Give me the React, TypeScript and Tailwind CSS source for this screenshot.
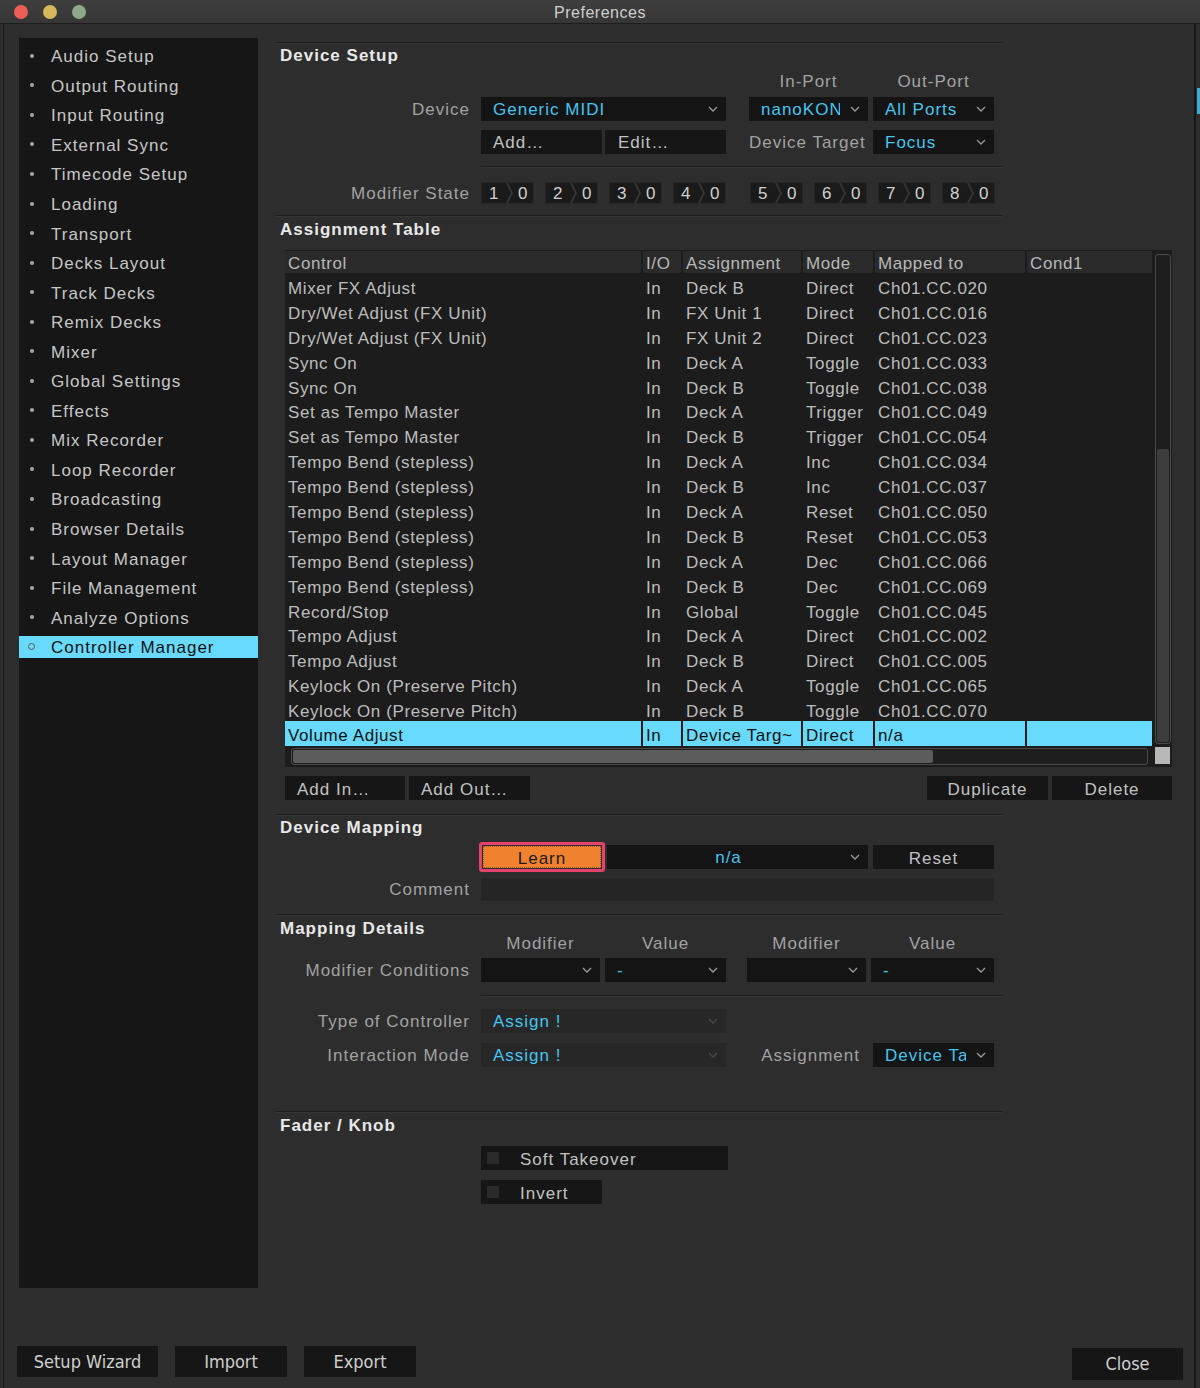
import React from "react";

const SIDEBAR = [
  "Audio Setup",
  "Output Routing",
  "Input Routing",
  "External Sync",
  "Timecode Setup",
  "Loading",
  "Transport",
  "Decks Layout",
  "Track Decks",
  "Remix Decks",
  "Mixer",
  "Global Settings",
  "Effects",
  "Mix Recorder",
  "Loop Recorder",
  "Broadcasting",
  "Browser Details",
  "Layout Manager",
  "File Management",
  "Analyze Options",
  "Controller Manager",
];

const ROWS = [
  ["Mixer FX Adjust", "In", "Deck B", "Direct", "Ch01.CC.020"],
  ["Dry/Wet Adjust (FX Unit)", "In", "FX Unit 1", "Direct", "Ch01.CC.016"],
  ["Dry/Wet Adjust (FX Unit)", "In", "FX Unit 2", "Direct", "Ch01.CC.023"],
  ["Sync On", "In", "Deck A", "Toggle", "Ch01.CC.033"],
  ["Sync On", "In", "Deck B", "Toggle", "Ch01.CC.038"],
  ["Set as Tempo Master", "In", "Deck A", "Trigger", "Ch01.CC.049"],
  ["Set as Tempo Master", "In", "Deck B", "Trigger", "Ch01.CC.054"],
  ["Tempo Bend (stepless)", "In", "Deck A", "Inc", "Ch01.CC.034"],
  ["Tempo Bend (stepless)", "In", "Deck B", "Inc", "Ch01.CC.037"],
  ["Tempo Bend (stepless)", "In", "Deck A", "Reset", "Ch01.CC.050"],
  ["Tempo Bend (stepless)", "In", "Deck B", "Reset", "Ch01.CC.053"],
  ["Tempo Bend (stepless)", "In", "Deck A", "Dec", "Ch01.CC.066"],
  ["Tempo Bend (stepless)", "In", "Deck B", "Dec", "Ch01.CC.069"],
  ["Record/Stop", "In", "Global", "Toggle", "Ch01.CC.045"],
  ["Tempo Adjust", "In", "Deck A", "Direct", "Ch01.CC.002"],
  ["Tempo Adjust", "In", "Deck B", "Direct", "Ch01.CC.005"],
  ["Keylock On (Preserve Pitch)", "In", "Deck A", "Toggle", "Ch01.CC.065"],
  ["Keylock On (Preserve Pitch)", "In", "Deck B", "Toggle", "Ch01.CC.070"],
];

function Chevron({ dim }: { dim?: boolean }) {
  return (
    <svg width="10" height="6" viewBox="0 0 10 6" className="shrink-0 ml-[10px]">
      <polyline
        points="1,1 5,5 9,1"
        fill="none"
        stroke={dim ? "#4a4a4a" : "#9a9a9a"}
        strokeWidth="1.3"
      />
    </svg>
  );
}

function Dropdown({
  className,
  text,
  textClass = "",
  dim,
  center,
}: {
  className: string;
  text?: string;
  textClass?: string;
  dim?: boolean;
  center?: boolean;
}) {
  return (
    <div
      className={`flex items-center pl-3 pr-[8px] ${dim ? "bg-[#272727]" : "bg-[#141414]"} ${className}`}
    >
      <div
        className={`flex-1 min-w-0 overflow-hidden whitespace-nowrap text-[#46c4ee] ${center ? "text-center" : ""} ${textClass}`}
      >
        {text}
      </div>
      <Chevron dim={dim} />
    </div>
  );
}

function Btn({ className, children }: { className: string; children: React.ReactNode }) {
  return (
    <div className={`flex items-center bg-[#161616] text-[#c2c2c2] ${className}`}>
      {children}
    </div>
  );
}

function ModBox({ n }: { n: number }) {
  return (
    <div className="flex items-center w-[53px] h-[22px] bg-[#1a1a1a] border border-[#262626] text-[#d0d0d0]">
      <span className="w-[24px] pl-[7px]">{n}</span>
      <svg width="7" height="20" viewBox="0 0 7 20" className="shrink-0">
        <path d="M1 0 L6 10 L1 20" fill="none" stroke="#333" strokeWidth="2" />
      </svg>
      <span className="pl-[5px]">0</span>
    </div>
  );
}

function Label({ children, className = "w-[194px]" }: { children: React.ReactNode; className?: string }) {
  return <div className={`${className} self-center text-right text-[#a2a2a2] shrink-0`}>{children}</div>;
}

function Header({ children }: { children: React.ReactNode }) {
  return <div className="pl-[4px] pt-[2px] font-bold text-[#e8e8e8]">{children}</div>;
}

function Line({ className = "w-[726px]" }: { className?: string }) {
  return <div className={`h-px bg-[#1c1c1c] shadow-[0_1px_0_#353535] ${className}`} />;
}

const COLS = [
  "w-[356px]",
  "w-[38px]",
  "w-[118px]",
  "w-[70px]",
  "w-[150px]",
  "w-[125px]",
];

function AssignmentTable() {
  const head = ["Control", "I/O", "Assignment", "Mode", "Mapped to", "Cond1"];
  return (
    <div className="ml-[9px] w-[887px] h-[517px] bg-[#1c1c1c] flex flex-col tracking-[0.6px]">
      <div className="flex h-[496px]">
        <div className="w-[867px] flex flex-col">
          <div className="flex gap-[2px] h-[23px] pt-px">
            {head.map((h, i) => (
              <div key={h} className={`${COLS[i]} bg-[#2a2a2a] pl-[3px] pt-[4px] text-[#b8b8b8]`}>
                {h}
              </div>
            ))}
          </div>
          {ROWS.map((r, ri) => (
            <div key={ri} className="flex gap-[2px] h-[24.9px] text-[#bcbcbc]">
              {[...r, ""].map((c, i) => (
                <div key={i} className={`${COLS[i]} pl-[3px] pt-[7px] whitespace-nowrap overflow-hidden`}>
                  {c}
                </div>
              ))}
            </div>
          ))}
          <div className="flex gap-[2px] h-[24.9px] text-[#111]">
            {["Volume Adjust", "In", "Device Targ~", "Direct", "n/a", ""].map((c, i) => (
              <div
                key={i}
                className={`${COLS[i]} bg-[#67dafd] pl-[3px] pt-[6px] whitespace-nowrap overflow-hidden`}
              >
                {c}
              </div>
            ))}
          </div>
        </div>
        <div className="w-[20px] pt-[4px] pl-[3px]">
          <div className="w-[16px] h-[490px] rounded-[3px] border border-[#4a4a4a] bg-[#1e1e1e] flex flex-col p-px">
            <div className="h-[193px]" />
            <div className="flex-1 rounded-[2px] bg-[#3c3c3c]" />
          </div>
        </div>
      </div>
      <div className="flex h-[21px] items-start">
        <div className="ml-[6px] mt-[2px] w-[857px] h-[17px] rounded-[3px] border border-[#4a4a4a] bg-[#1e1e1e] p-px">
          <div className="w-[640px] h-full rounded-[2px] bg-[#5c5c5c]" />
        </div>
        <div className="ml-[7px] mt-[1px] w-[15px] h-[17px] bg-[#b8b8b8]" />
      </div>
    </div>
  );
}

export default function App() {
  return (
    <div
      className="relative w-[1200px] h-[1388px] bg-[#2d2d2d] overflow-hidden flex flex-col text-[17px] tracking-[1px] leading-none"
      style={{ fontFamily: '"Liberation Sans", Arial, sans-serif' }}
    >
      {/* title bar */}
      <div className="relative h-[24px] shrink-0 bg-gradient-to-b from-[#3e3e3e] to-[#363636] border-b border-[#1d1d1d] flex items-center justify-center">
        <div className="absolute left-[14px] top-[5px] flex gap-[15px]">
          <div className="w-[14px] h-[14px] rounded-full bg-[#ec5f57]" />
          <div className="w-[14px] h-[14px] rounded-full bg-[#d7b75c]" />
          <div className="w-[14px] h-[14px] rounded-full bg-[#8fa88a]" />
        </div>
        <span className="pt-[2px] text-[16px] tracking-[0.5px] text-[#cfcfcf]">Preferences</span>
      </div>

      {/* window edges */}
      <div className="absolute left-[3px] top-[24px] bottom-0 w-px bg-[#1a1a1a]" />
      <div className="absolute right-[4px] top-[24px] bottom-0 w-[2px] bg-[#171717]" />
      <div className="absolute right-0 top-[88px] w-[3px] h-[26px] bg-[#3fa9cf]" />

      <div className="flex pl-[19px] pt-[14px]">
        {/* sidebar */}
        <div className="w-[239px] h-[1250px] bg-[#161616] pt-[3px]">
          {SIDEBAR.map((s) => {
            const sel = s === "Controller Manager";
            return (
              <div key={s} className="h-[29.55px] flex items-center">
                <div
                  className={`w-full h-[22px] flex items-center ${sel ? "bg-[#67dafd] text-[#111]" : "text-[#c6c6c6]"}`}
                >
                  <div className="w-[32px] flex justify-end pr-[16px]">
                    {sel ? (
                      <div className="w-[7px] h-[7px] rounded-full border-[1.5px] border-[#555]" />
                    ) : (
                      <div className="w-[4px] h-[4px] mr-[1px] rounded-full bg-[#a8a8a8]" />
                    )}
                  </div>
                  <span className="pt-[2px]">{s}</span>
                </div>
              </div>
            );
          })}
        </div>

        {/* main */}
        <div className="ml-[18px] w-[899px] flex flex-col">
          <div className="h-[4px]" />
          <Line />
          <div className="h-[22px] flex items-center">
            <Header>Device Setup</Header>
          </div>
          <div className="h-[32px] flex items-center text-[#a2a2a2]">
            <div className="ml-[473px] w-[119px] text-center">In-Port</div>
            <div className="ml-[5px] w-[121px] text-center">Out-Port</div>
          </div>
          <div className="h-[24px] flex">
            <Label>Device</Label>
            <div className="w-[11px]" />
            <Dropdown className="w-[245px]" text="Generic MIDI" />
            <div className="w-[23px]" />
            <Dropdown className="w-[119px]" text="nanoKONTROL2" />
            <div className="w-[5px]" />
            <Dropdown className="w-[121px]" text="All Ports" />
          </div>
          <div className="h-[24px] mt-[9px] flex items-center">
            <div className="w-[205px]" />
            <Btn className="w-[121px] h-full pl-[12px]">Add…</Btn>
            <Btn className="ml-[3px] w-[121px] h-full pl-[13px]">Edit…</Btn>
            <div className="ml-[23px] w-[124px] text-[#a2a2a2] whitespace-nowrap">Device Target</div>
            <Dropdown className="w-[121px] h-full" text="Focus" />
          </div>
          <div className="mt-[12px] ml-[205px]">
            <Line className="w-[521px]" />
          </div>
          <div className="mt-[15px] h-[22px] flex items-center">
            <Label>Modifier State</Label>
            <div className="ml-[11px] flex gap-[11px]">
              <ModBox n={1} />
              <ModBox n={2} />
              <ModBox n={3} />
              <ModBox n={4} />
            </div>
            <div className="ml-[24px] flex gap-[11px]">
              <ModBox n={5} />
              <ModBox n={6} />
              <ModBox n={7} />
              <ModBox n={8} />
            </div>
          </div>
          <div className="mt-[11px]">
            <Line />
          </div>
          <div className="h-[24px] flex items-center">
            <Header>Assignment Table</Header>
          </div>
          <div className="mt-[10px]">
            <AssignmentTable />
          </div>
          <div className="mt-[9px] h-[24px] flex ml-[9px]">
            <Btn className="w-[120px] h-full pl-[12px] pt-[2px]">Add In…</Btn>
            <Btn className="ml-[4px] w-[121px] h-full pl-[12px] pt-[2px]">Add Out…</Btn>
            <Btn className="ml-auto w-[121px] h-full justify-center pt-[2px]">Duplicate</Btn>
            <Btn className="ml-[4px] mr-[3px] w-[120px] h-full justify-center pt-[2px]">Delete</Btn>
          </div>
          <div className="mt-[14px]">
            <Line />
          </div>
          <div className="h-[22px] flex items-center">
            <Header>Device Mapping</Header>
          </div>
          <div className="mt-[5px] h-[30px] flex items-center">
            <div className="w-[203px]" />
            <div className="w-[126px] h-[30px] rounded-[3px] border-[3px] border-[#e4436c] p-px">
              <div className="w-full h-full bg-[#f0822f] flex items-center justify-center pt-[2px] text-[#1a1a1a] outline outline-1 outline-dotted outline-[#9a5a2a] -outline-offset-1">
                Learn
              </div>
            </div>
            <Dropdown className="ml-[2px] w-[261px] h-[24px]" text="n/a" textClass="pr-[2px]" center />
            <Btn className="ml-[5px] w-[121px] h-[24px] justify-center pt-[2px]">Reset</Btn>
          </div>
          <div className="mt-[6px] h-[23px] flex items-center">
            <Label>Comment</Label>
            <div className="ml-[11px] w-[513px] h-full bg-[#252525]" />
          </div>
          <div className="mt-[13px]">
            <Line />
          </div>
          <div className="h-[43px] flex">
            <div className="w-[205px] h-[24px] flex items-center">
              <Header>Mapping Details</Header>
            </div>
            <div className="pt-[20px] flex h-[18px] text-[#a2a2a2]">
              <div className="w-[119px] text-center">Modifier</div>
              <div className="ml-[5px] w-[121px] text-center">Value</div>
              <div className="ml-[21px] w-[119px] text-center">Modifier</div>
              <div className="ml-[5px] w-[123px] text-center">Value</div>
            </div>
          </div>
          <div className="h-[24px] flex items-center">
            <Label>Modifier Conditions</Label>
            <div className="w-[11px]" />
            <Dropdown className="w-[119px] h-full" />
            <Dropdown className="ml-[5px] w-[121px] h-full" text="-" />
            <Dropdown className="ml-[21px] w-[119px] h-full" />
            <Dropdown className="ml-[5px] w-[123px] h-full" text="-" />
          </div>
          <div className="mt-[13px] ml-[205px]">
            <Line className="w-[521px]" />
          </div>
          <div className="mt-[13px] h-[24px] flex items-center">
            <Label>Type of Controller</Label>
            <div className="w-[11px]" />
            <Dropdown className="w-[245px] h-full" text="Assign !" dim />
          </div>
          <div className="mt-[10px] h-[24px] flex items-center">
            <Label>Interaction Mode</Label>
            <div className="w-[11px]" />
            <Dropdown className="w-[245px] h-full" text="Assign !" dim />
            <Label className="w-[134px]">Assignment</Label>
            <div className="w-[13px]" />
            <Dropdown className="w-[121px] h-full" text="Device Target" />
          </div>
          <div className="mt-[44px]">
            <Line />
          </div>
          <div className="h-[24px] flex items-center">
            <Header>Fader / Knob</Header>
          </div>
          <div className="mt-[10px] ml-[205px] w-[247px] h-[24px] bg-[#161616] flex items-center text-[#c2c2c2]">
            <div className="ml-[6px] w-[12px] h-[12px] bg-[#2a2a2a]" />
            <span className="ml-[21px] pt-[2px]">Soft Takeover</span>
          </div>
          <div className="mt-[10px] ml-[205px] w-[121px] h-[24px] bg-[#161616] flex items-center text-[#c2c2c2]">
            <div className="ml-[6px] w-[12px] h-[12px] bg-[#2a2a2a]" />
            <span className="ml-[21px] pt-[2px]">Invert</span>
          </div>
        </div>
      </div>

      {/* bottom buttons */}
      <div
        className="mt-[58px] flex items-start pl-[17px] text-[18px] tracking-[0px] text-[#cfcfcf] font-stretch-condensed"
        style={{ fontFamily: '"DejaVu Sans", "Liberation Sans", sans-serif' }}
      >
        <div className="w-[141px] h-[31px] bg-[#161616] flex items-center justify-center">Setup Wizard</div>
        <div className="ml-[17px] w-[112px] h-[31px] bg-[#161616] flex items-center justify-center">Import</div>
        <div className="ml-[17px] w-[112px] h-[31px] bg-[#161616] flex items-center justify-center">Export</div>
        <div className="ml-auto mr-[17px] mt-[2px] w-[111px] h-[32px] bg-[#161616] flex items-center justify-center">Close</div>
      </div>
    </div>
  );
}
